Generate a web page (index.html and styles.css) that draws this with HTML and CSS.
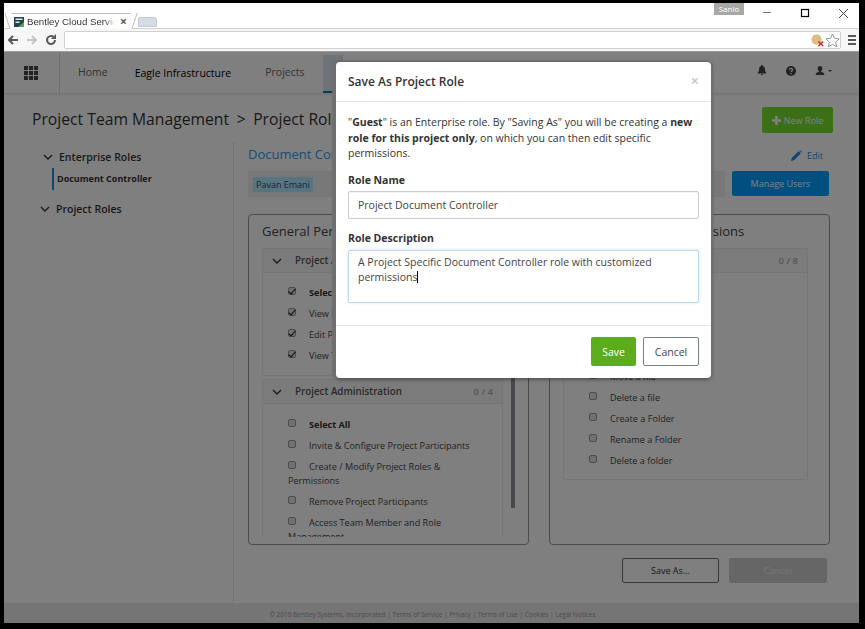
FILE: index.html
```html
<!DOCTYPE html>
<html lang="en">
<head>
<meta charset="utf-8">
<title>Save As Project Role</title>
<link rel="stylesheet" href="styles.css">
</head>
<body>
<div class="screen">
  <header class="chrome">
    <div class="tabstrip">
      <div class="tab">
        <svg class="favicon" width="10" height="10" viewBox="0 0 10 10"><rect width="10" height="10" fill="#26424f"/><path d="M1.500 1.500h7v1.500h-7zM1.500 4.500h4v1.500h-4z" fill="#dfe7ea"/><path d="M4 10l6-5v5z" fill="#4fa85a"/></svg>
        <span class="tab-title">Bentley Cloud Service</span>
        <span class="tab-close">×</span>
      </div>
      <div class="tab-new"></div>
      <div class="user-badge">Sanlo</div>
      <div class="win-controls">
        <svg width="14" height="14" viewBox="0 0 14 14"><path d="M0 6.500h8" stroke="#777" fill="none"/></svg>
        <svg class="win-max" width="14" height="14" viewBox="0 0 14 14"><rect x="3.500" y="3.500" width="7" height="7" stroke="#000" stroke-width="1.200" fill="none"/></svg>
        <svg class="win-close" width="14" height="14" viewBox="0 0 14 14"><path d="M3 3l9 9M12 3l-9 9" stroke="#444" fill="none"/></svg>
      </div>
    </div>
    <div class="toolbar">
      <svg class="nav-ic" width="14" height="12" viewBox="0 0 14 12"><path d="M12 6H3M7 2L3 6l4 4" stroke="#5a5a5a" stroke-width="2" fill="none"/></svg>
      <svg class="nav-ic" width="14" height="12" viewBox="0 0 14 12"><path d="M2 6h9M7 2l4 4-4 4" stroke="#c4c4c4" stroke-width="2" fill="none"/></svg>
      <svg class="nav-ic" width="14" height="12" viewBox="0 0 14 12"><path d="M11 6a4 4 0 1 1-1.500-3.100" stroke="#5a5a5a" stroke-width="2" fill="none"/><path d="M12 0v5H7z" fill="#5a5a5a"/></svg>
      <div class="omnibox">
        <svg width="13" height="13" viewBox="0 0 14 14"><circle cx="6" cy="6" r="5.500" fill="#d9bd85"/><path d="M8 8l5 5M13 8l-5 5" stroke="#d22" stroke-width="1.600"/></svg>
        <svg width="15" height="15" viewBox="0 0 15 15"><path d="M7.500 1l2 4.300 4.700.6-3.500 3.200.9 4.600-4.100-2.300-4.100 2.300.9-4.600L.800 5.900l4.700-.6z" fill="#fff" stroke="#999"/></svg>
      </div>
      <div class="menu-ic"><i></i><i></i><i></i></div>
    </div>
  </header>

  <div class="app">
    <nav class="topnav">
      <div class="grid-cell">
        <div class="waffle"><i></i><i></i><i></i><i></i><i></i><i></i><i></i><i></i><i></i></div>
      </div>
      <div class="nav-links">
        <span class="nav-link">Home</span>
        <span class="nav-link nav-dark">Eagle Infrastructure</span>
        <span class="nav-link">Projects</span>
        <span class="nav-active"></span>
      </div>
      <div class="nav-icons">
        <svg width="10" height="11" viewBox="0 0 12 13"><path d="M6 0c.7 0 1 .5 1 1 2 .5 2.500 2 2.500 4 0 2 .5 3 1.500 4v1H1V9c1-1 1.500-2 1.500-4 0-2 .5-3.500 2.500-4 0-.5.300-1 1-1zM4.500 10.800h3L6 12.500z" fill="#444"/></svg>
        <svg width="10" height="10" viewBox="0 0 12 12"><circle cx="6" cy="6" r="6" fill="#444"/><path d="M4.200 4.600c0-2.200 3.700-2.200 3.700 0 0 1.400-1.900 1.300-1.900 2.700" stroke="#fff" stroke-width="1.500" fill="none"/><rect x="5.200" y="8.400" width="1.600" height="1.600" fill="#fff"/></svg>
        <span class="user-ic">
          <svg width="10" height="11" viewBox="0 0 13 12"><path d="M6.500 0c2 0 3 1.500 3 3.500 0 1.500-.7 2.500-1.500 3.200V8c2 .5 4 1.200 4 2.500V12H1v-1.500C1 9.200 3 8.500 5 8V6.700C4.200 6 3.500 5 3.500 3.500c0-2 1-3.500 3-3.500z" fill="#444"/></svg>
          <svg width="4" height="2" viewBox="0 0 6 3"><path d="M0 0h6L3 3z" fill="#444"/></svg>
        </span>
      </div>
    </nav>

    <div class="page-head">
      <h1 class="crumbs">Project Team Management <span class="sep">&gt;</span> Project Roles</h1>
      <button class="btn-new"><svg width="9" height="9" viewBox="0 0 9 9"><path d="M3.200 0h2.600v3.200H9v2.600H5.800V9H3.200V5.800H0V3.200h3.200z" fill="#fff"/></svg>New Role</button>
    </div>

    <div class="content">
      <aside class="sidebar">
        <div class="side-group side-first">
          <div class="side-head"><svg class="chev" width="10" height="6" viewBox="0 0 10 6"><path d="M1 1l4 4 4-4" stroke="#333" stroke-width="1.300" fill="none"/></svg>Enterprise Roles</div>
          <div class="side-item">Document Controller</div>
        </div>
        <div class="side-group side-second">
          <div class="side-head"><svg class="chev" width="10" height="6" viewBox="0 0 10 6"><path d="M1 1l4 4 4-4" stroke="#333" stroke-width="1.300" fill="none"/></svg>Project Roles</div>
        </div>
      </aside>
      <main class="detail">
        <div class="detail-title">
          <span class="role-link">Document Controller</span>
          <span class="edit"><svg width="11" height="11" viewBox="0 0 11 11"><path d="M0 11l.7-3L7.500 1.200l2.300 2.300L3 10.300zM8.300.5l.6-.5 2.100 2.100-.6.600z" fill="#1f8fe0"/></svg>Edit</span>
        </div>
        <div class="users-row">
          <div class="users-box"><span class="chip">Pavan Emani</span></div>
          <button class="btn-manage">Manage Users</button>
        </div>
        <div class="perm-cols">
          <section class="perm-panel">
            <h2 class="perm-title">General Permissions</h2>
            <div class="scroll-area">
              <div class="scroll-inner">
                <div class="acc acc-first">
                  <div class="acc-head"><svg class="chev" width="10" height="6" viewBox="0 0 10 6"><path d="M1 1l4 4 4-4" stroke="#333" stroke-width="1.300" fill="none"/></svg><span>Project Access</span><em>4 / 4</em></div>
                  <ul class="acc-body">
                    <li class="strong"><span class="cb on"></span>Select All</li>
                    <li><span class="cb on"></span>View Project</li>
                    <li><span class="cb on"></span>Edit Project</li>
                    <li><span class="cb on"></span>View Team</li>
                  </ul>
                </div>
                <div class="acc acc-second">
                  <div class="acc-head"><svg class="chev" width="10" height="6" viewBox="0 0 10 6"><path d="M1 1l4 4 4-4" stroke="#333" stroke-width="1.300" fill="none"/></svg><span>Project Administration</span><em>0 / 4</em></div>
                  <ul class="acc-body">
                    <li class="strong"><span class="cb"></span>Select All</li>
                    <li><span class="cb"></span>Invite &amp; Configure Project Participants</li>
                    <li><span class="cb"></span>Create / Modify Project Roles &amp; Permissions</li>
                    <li><span class="cb"></span>Remove Project Participants</li>
                    <li><span class="cb"></span>Access Team Member and Role Management</li>
                  </ul>
                </div>
              </div>
              <div class="scrollbar"></div>
            </div>
          </section>
          <section class="perm-panel">
            <h2 class="perm-title">File Management Permissions</h2>
            <div class="acc acc-right">
              <div class="acc-head"><svg class="chev" width="10" height="6" viewBox="0 0 10 6"><path d="M1 1l4 4 4-4" stroke="#333" stroke-width="1.300" fill="none"/></svg><span>Files</span><em>0 / 8</em></div>
              <ul class="acc-body">
                <li class="strong"><span class="cb"></span>Select All</li>
                <li><span class="cb"></span>View a file</li>
                <li><span class="cb"></span>Download a file</li>
                <li><span class="cb"></span>Upload a file</li>
                <li><span class="cb"></span>Move a file</li>
                <li><span class="cb"></span>Delete a file</li>
                <li><span class="cb"></span>Create a Folder</li>
                <li><span class="cb"></span>Rename a Folder</li>
                <li><span class="cb"></span>Delete a folder</li>
              </ul>
            </div>
          </section>
        </div>
        <div class="actions">
          <button class="btn-saveas">Save As...</button>
          <button class="btn-cancel-bg">Cancel</button>
        </div>
      </main>
    </div>

    <footer class="foot">© 2016 Bentley Systems, Incorporated | Terms of Service | Privacy | Terms of Use | Cookies | Legal Notices</footer>
  </div>

  <div class="scrim"></div>

  <div class="modal">
    <div class="modal-head">
      <h3 class="modal-title">Save As Project Role</h3>
      <span class="modal-x">×</span>
    </div>
    <div class="modal-body">
      <p class="intro">"<b>Guest</b>" is an Enterprise role. By "Saving As" you will be creating a <b>new role for this project only</b>, on which you can then edit specific permissions.</p>
      <label class="lbl">Role Name</label>
      <div class="field">Project Document Controller</div>
      <label class="lbl">Role Description</label>
      <div class="field area">A Project Specific Document Controller role with customized permissions<span class="caret"></span></div>
    </div>
    <div class="modal-foot">
      <button class="btn-save">Save</button>
      <button class="btn-cancel">Cancel</button>
    </div>
  </div>
</div>
</body>
</html>
```
FILE: styles.css
```css
* { box-sizing: border-box; }
html, body { margin: 0; padding: 0; }
body { width: 865px; height: 629px; overflow: hidden; background: #000; font-family: "Open Sans", "Liberation Sans", sans-serif; }
button { font-family: inherit; }
ul { list-style: none; margin: 0; padding: 0; }
.screen { position: relative; width: 865px; height: 629px; padding: 3px 6px 6px 4px; background: #000; overflow: hidden; display: flex; flex-direction: column; }

.chrome { flex: none; background: #fff; height: 49px; border-bottom: 1px solid #a0a0a0; }
.tabstrip { height: 26px; display: flex; align-items: flex-end; position: relative; padding-left: 6px; border-bottom: 1px solid #d0d0d0; }
.tab { position: relative; width: 122px; height: 16px; margin-bottom: -1px; border-top: 1px solid #bcbcbc; display: flex; align-items: center; padding: 0 4px 0 4px; color: #333; background: #fff; white-space: nowrap; }
.tab::before, .tab::after { content: ""; position: absolute; top: -1px; bottom: 0; width: 6px; background: #fff; border-left: 1px solid #bcbcbc; }
.tab::before { left: -3px; transform: skewX(18deg); }
.tab::after { right: -3px; border-left: 0; border-right: 1px solid #bcbcbc; transform: skewX(-18deg); }
.favicon { flex: none; margin-right: 3px; position: relative; z-index: 1; }
.tab-title { font-family: "Liberation Sans", sans-serif; font-size: 9.700px; width: 88px; flex: none; overflow: hidden; -webkit-mask-image: linear-gradient(90deg, #000 88%, transparent); mask-image: linear-gradient(90deg, #000 88%, transparent); }
.tab-close { flex: none; margin-left: 5px; font-size: 12px; line-height: 12px; color: #555; font-weight: 700; position: relative; z-index: 1; }
.tab-new { width: 19px; height: 10px; margin: 0 0 1px 6px; background: #d4dce6; border: 1px solid #c4c8d0; border-radius: 2px 3px 0 0; }
.user-badge { position: absolute; left: 710px; top: 0; width: 30px; height: 12px; background: #a8a8a8; color: #fff; font-size: 8px; line-height: 11px; text-align: center; }
.win-controls { position: absolute; left: 759px; top: 3px; display: flex; }
.win-max { margin-left: 21px; }
.win-close { margin-left: 24px; }
.toolbar { height: 22px; display: flex; align-items: center; padding: 0 3px 0 2px; gap: 5px; background: #f6f6f6; }
.nav-ic { flex: none; }
.omnibox { flex: 1; height: 18px; margin-left: 1px; background: #fff; border: 1px solid #d0d0d0; border-radius: 2px; display: flex; justify-content: flex-end; align-items: center; gap: 1px; padding-right: 0; }
.menu-ic { width: 8px; display: flex; flex-direction: column; gap: 2px; margin-left: 2px; }
.menu-ic i { display: block; height: 2px; background: #555; }

.app { flex: 1; min-height: 0; background: #fff; display: flex; flex-direction: column; position: relative; }
.topnav { flex: none; height: 41px; display: flex; align-items: stretch; box-shadow: 0 1px 3px rgba(0,0,0,.15); position: relative; }
.grid-cell { width: 56px; display: flex; align-items: center; justify-content: center; border-right: 1px solid #ddd; padding: 0 1px 0 0; }
.waffle { display: grid; grid-template-columns: repeat(3, 4px); gap: 1px; }
.waffle i { display: block; width: 4px; height: 4px; background: #444; }
.nav-links { display: flex; align-items: center; padding-left: 18px; position: relative; width: 284px; font-size: 10.500px; }
.nav-link { color: #666; margin-right: 27px; position: relative; top: -1px; }
.nav-dark { color: #000; top: 0; margin-right: 34px; }
.nav-active { position: absolute; left: 263px; top: 3px; bottom: 0; width: 20px; background: #dbe6f0; border-bottom: 2px solid #0a78c2; }
.nav-icons { margin-left: auto; display: flex; align-items: center; gap: 19px; padding-right: 27px; padding-bottom: 4px; }
.user-ic { display: flex; align-items: center; gap: 3px; }

.page-head { flex: none; height: 50px; display: flex; align-items: flex-start; justify-content: space-between; padding: 15px 26px 0 28px; }
.crumbs { margin: 0; font-size: 15.700px; font-weight: 400; color: #333; white-space: nowrap; line-height: 23px; }
.sep { margin: 0 3.500px; }
.btn-new { width: 71px; height: 26px; margin-top: -1px; border: 0; border-radius: 2px; background: #78e030; color: #fff; font-size: 9px; padding: 0; display: flex; align-items: center; justify-content: center; gap: 3px; }

.content { flex: 1; min-height: 0; display: flex; }
.sidebar { width: 230px; flex: none; padding: 0 0 0 27px; border-right: 1px dotted #ccc; }
.side-group { width: 189px; border-bottom: 1px solid #fafafa; }
.side-first { height: 51px; padding-top: 7px; padding-left: 12px; }
.side-second { height: 37px; padding-top: 8px; padding-left: 9px; }
.side-head { font-size: 10.500px; font-weight: 600; color: #333; display: flex; align-items: center; line-height: 14px; }
.side-head .chev { margin-right: 6px; }
.side-item { margin: 4px 0 0 9px; padding-left: 3px; border-left: 2px solid #1490e0; height: 22px; line-height: 21px; font-size: 9px; font-weight: 700; color: #333; white-space: nowrap; }

.detail { flex: 1; min-width: 0; padding: 0 29px 0 14px; }
.detail-title { display: flex; justify-content: space-between; align-items: center; height: 22px; }
.role-link { font-size: 13px; color: #2a9cf0; }
.edit { font-size: 9px; color: #1f8fe0; display: flex; align-items: center; gap: 5px; padding-right: 7px; padding-top: 2px; }
.users-row { display: flex; gap: 7px; height: 26px; margin-top: 6px; }
.users-box { flex: 1; background: #f0f0f0; padding: 6px 1px 0 5px; height: 26px; }
.chip { display: inline-block; height: 15px; line-height: 15px; padding: 0 3px; background: #b0e8ff; color: #23527c; font-size: 9px; vertical-align: top; }
.btn-manage { width: 97px; height: 25px; border: 0; border-radius: 2px; background: #00a0ff; color: #fff; font-size: 9px; padding: 0; margin-right: 1px; }
.perm-cols { display: flex; gap: 20px; margin-top: 17px; height: 331px; }
.perm-panel { width: 281px; border: 1px solid #999; border-radius: 4px; padding: 0 13px; flex: none; }
.perm-title { margin: 0; font-size: 13px; font-weight: 400; color: #444; line-height: 32px; height: 33px; white-space: nowrap; }
.scroll-area { position: relative; height: 289px; overflow: hidden; display: flex; }
.scroll-inner { width: 241px; flex: none; display: flex; flex-direction: column; gap: 3px; }
.scrollbar { position: absolute; left: 249px; top: 0; width: 4px; height: 260px; background: #8f939b; }
.acc { border: 1px solid #ececec; border-radius: 2px; }
.acc-first { height: 128px; flex: none; }
.acc-right { width: 245px; height: 232px; overflow: hidden; }
.acc-head { display: flex; align-items: center; height: 24px; background: #f7f7f7; border-bottom: 1px solid #ececec; padding: 0 9px; font-size: 9.800px; font-weight: 600; color: #555; }
.acc-head .chev { margin-right: 13px; }
.acc-head span { flex: 1; white-space: nowrap; }
.acc-head em { font-style: normal; color: #aaa; font-size: 9.500px; font-weight: 600; }
.acc-body { padding: 13px 15px 0 25px; }
.acc-second .acc-body { padding-top: 14px; }
.acc-body li { font-size: 9.100px; color: #444; line-height: 14px; margin-bottom: 7px; }
.acc-body li.strong { font-weight: 700; color: #333; }
.cb { position: relative; display: inline-block; width: 8px; height: 8px; margin-right: 13px; border: 1px solid #999; border-radius: 2px; background: #e2e2e2; vertical-align: 1px; }
.cb.on::after { content: ""; position: absolute; left: 1px; top: -1px; width: 3px; height: 6px; border: solid #111; border-width: 0 1.500px 1.500px 0; transform: rotate(40deg); }
.actions { display: flex; justify-content: flex-end; gap: 10px; margin-top: 13px; padding-right: 3px; }
.btn-saveas, .btn-cancel-bg { height: 25px; border-radius: 2px; font-size: 9px; padding: 0; }
.btn-saveas { width: 97px; background: #fff; border: 1px solid #6a7078; color: #333; }
.btn-cancel-bg { width: 98px; background: #ccc; border: 0; color: #eee; }
.foot { position: absolute; left: 0; right: 0; bottom: 0; height: 20px; background: #eaeaea; font-size: 6.500px; line-height: 24px; text-align: center; color: #999; padding-left: 2px; }

.scrim { position: absolute; left: 4px; top: 52px; width: 855px; height: 571px; background: rgba(0,0,0,.5); }

.modal { position: absolute; left: 336px; top: 62px; width: 375px; height: 316px; background: #fff; border-radius: 4px; box-shadow: -4px 0 1px #6f6f6f, 2px 0 0 #6f6f6f, 0 -1px 0 #666, 0 1px 4px rgba(0,0,0,.5); display: flex; flex-direction: column; }
.modal-head { flex: none; height: 40px; border-bottom: 1px solid #e5e5e5; display: flex; align-items: center; justify-content: space-between; padding: 0 12px; }
.modal-title { margin: 0; font-size: 12px; font-weight: 600; color: #333; }
.modal-x { font-size: 15px; font-weight: 700; color: #ccc; position: relative; top: -2px; }
.modal-body { flex: 1; padding: 13px 12px 0; }
.intro { margin: 0; font-size: 10.500px; line-height: 15.500px; color: #333; }
.intro b { font-weight: 700; }
.lbl { display: block; margin: 11px 0 4px; font-size: 10.500px; line-height: 14px; font-weight: 700; color: #333; }
.field { height: 28px; border: 1px solid #ccc; border-radius: 2px; padding: 0 9px; font-size: 10.500px; line-height: 26px; color: #444; box-shadow: inset 0 1px 1px rgba(0,0,0,.05); }
.field + .lbl { margin-top: 12px; }
.area { height: 53px; margin-top: 5px; padding-top: 4px; line-height: 15px; border-color: #bcd8ee; box-shadow: 0 0 3px rgba(102,175,233,.35); }
.caret { display: inline-block; width: 1px; height: 12px; background: #000; vertical-align: -2px; }
.modal-foot { flex: none; height: 53px; border-top: 1px solid #e5e5e5; display: flex; justify-content: flex-end; align-items: flex-start; gap: 7px; padding: 11px 12px 0; }
.btn-save, .btn-cancel { height: 29px; border-radius: 2px; font-size: 10.500px; padding: 0; }
.btn-save { width: 45px; background: #5cac1e; border: 0; color: #fff; }
.btn-cancel { width: 56px; background: #fff; border: 1px solid #77808a; color: #444; }
```
